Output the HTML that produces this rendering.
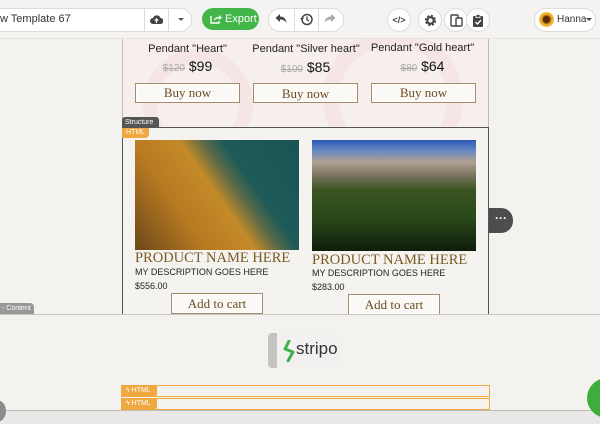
<!DOCTYPE html>
<html><head><meta charset="utf-8"><style>
*{box-sizing:border-box;margin:0;padding:0}
body{width:600px;height:424px;overflow:hidden;background:#f4f2ef;font-family:"Liberation Sans",sans-serif;position:relative}
.abs{position:absolute}
.tb{left:0;top:0;width:600px;height:39px;background:#f4f3f2;border-bottom:1px solid #e4e2df}
.pill{background:#fff;border:1px solid #dedcda;border-radius:12px;height:24px}
.circ{width:24px;height:24px;border-radius:50%;background:#fff;border:1px solid #dedcda;display:flex;align-items:center;justify-content:center}
.serif{font-family:"Liberation Serif",serif}
.btn{border:1px solid #a48a66;background:#fbf9f6;color:#6b4d22;font-family:"Liberation Serif",serif;font-size:13px;text-align:center;box-shadow:inset 0 0 0 1px #fff}
.pt{font-size:11px;color:#222;text-align:center;width:117px}
.pr{font-size:14px;color:#111;text-align:center;width:117px}
.pr s{font-size:10px;color:#aaa}
.hb{left:121px;width:369px;height:12px;border:1.5px solid #f0a840}
.ht{left:121px;width:36px;height:12px;background:#f0a840;color:#fff;font-size:7px;line-height:12px;padding-left:5px;border-radius:0 0 3px 0}
</style></head><body>
<div class="abs tb"></div>
<div class="abs pill" style="left:-14px;top:8px;width:206px;border-radius:0 12px 12px 0;"></div>
<div class="abs" style="left:0;top:13px;font-size:11px;color:#333">w Template 67</div>
<div class="abs" style="left:144px;top:8px;width:1px;height:24px;background:#dedcda"></div>
<div class="abs" style="left:168px;top:8px;width:1px;height:24px;background:#dedcda"></div>
<svg class="abs" style="left:150px;top:14px" width="13" height="11" viewBox="0 0 13 11"><path d="M3 10a3 3 0 0 1 0-6a4 4 0 0 1 7.5 0a3 3 0 0 1 0 6z" fill="#444"/><path d="M6.5 9V5M4.8 6.6l1.7-1.7 1.7 1.7" stroke="#fff" stroke-width="1.2" fill="none"/></svg>
<div class="abs" style="left:178px;top:18px;border:3px solid transparent;border-top:3px solid #555;border-bottom:0"></div>
<div class="abs" style="left:202px;top:8px;width:57px;height:22px;border-radius:11px;background:#43b649;color:#fff;font-size:11px;line-height:22px;padding-left:23px">Export</div>
<svg class="abs" style="left:210px;top:13px" width="12" height="11" viewBox="0 0 12 11"><path d="M1 3v7h8V8" stroke="#fff" stroke-width="1.4" fill="none"/><path d="M4 8c0-3 2-4 5-4V2l3 2.5-3 2.5V5.5C7 5.5 5 6 4 8z" fill="#fff"/></svg>
<div class="abs pill" style="left:268px;top:8px;width:76px"></div>
<div class="abs" style="left:294px;top:8px;width:1px;height:24px;background:#dedcda"></div>
<div class="abs" style="left:318px;top:8px;width:1px;height:24px;background:#dedcda"></div>
<svg class="abs" style="left:275px;top:13px" width="12" height="11" viewBox="0 0 12 11"><path d="M5 1L0.5 5 5 9V6.5c3 0 5 1 6.5 3.5C11 6 9 3.5 5 3.5z" fill="#444"/></svg>
<svg class="abs" style="left:300px;top:13px" width="13" height="13" viewBox="0 0 13 13"><circle cx="7" cy="6.5" r="5" stroke="#444" stroke-width="1.5" fill="none"/><path d="M7 3.5v3.2l2 1.3" stroke="#444" stroke-width="1.3" fill="none"/><path d="M0 5l2.2 2.3L4 5z" fill="#444"/></svg>
<svg class="abs" style="left:324px;top:13px" width="12" height="11" viewBox="0 0 12 11"><path d="M7 1l4.5 4L7 9V6.5c-3 0-5 1-6.5 3.5C1 6 3 3.5 7 3.5z" fill="#aaa"/></svg>
<div class="abs circ" style="left:387px;top:8px;font-size:9px;color:#444;font-weight:bold">&lt;/&gt;</div>
<div class="abs circ" style="left:418px;top:8px"><svg width="13" height="13" viewBox="0 0 13 13"><circle cx="6.5" cy="6.5" r="4.3" fill="none" stroke="#444" stroke-width="2.6" stroke-dasharray="2 1.4"/><circle cx="6.5" cy="6.5" r="3.2" fill="none" stroke="#444" stroke-width="2"/></svg></div>
<div class="abs circ" style="left:444px;top:8px"><svg width="13" height="13" viewBox="0 0 13 13"><rect x="1" y="1" width="7" height="11" rx="1" stroke="#444" stroke-width="1.4" fill="none"/><rect x="6" y="4" width="6" height="8" rx="1" stroke="#444" stroke-width="1.4" fill="#fff"/></svg></div>
<div class="abs circ" style="left:466px;top:8px"><svg width="12" height="13" viewBox="0 0 12 13"><rect x="1" y="2" width="10" height="11" rx="1" fill="#444"/><rect x="4" y="0.5" width="4" height="3" fill="#444" stroke="#fff" stroke-width=".8"/><path d="M3.5 8l2 2 3.5-4" stroke="#fff" stroke-width="1.4" fill="none"/></svg></div>
<div class="abs pill" style="left:534px;top:8px;width:62px"></div>
<div class="abs" style="left:539px;top:12px;width:15px;height:15px;border-radius:50%;background:radial-gradient(#5a2d08 30%,#e8a020 45%,#f3c040 70%)"></div>
<div class="abs" style="left:557px;top:14px;font-size:10px;color:#333">Hanna</div>
<div class="abs" style="left:586px;top:18px;border:3px solid transparent;border-top:3px solid #444;border-bottom:0"></div>

<div class="abs" style="left:122px;top:39px;width:367px;height:89px;background:#f6efed;border-left:1px solid #c9b8a6;border-right:1px solid #c9b8a6;overflow:hidden">
<div class="abs" style="left:20px;top:10px;width:110px;height:110px;border-radius:50%;border:14px solid rgba(240,200,200,.22)"></div>
<div class="abs" style="left:200px;top:-10px;width:140px;height:140px;border-radius:50%;border:16px solid rgba(240,200,200,.22)"></div>
</div>
<div class="abs pt" style="left:129px;top:43px">Pendant "Heart"</div>
<div class="abs pt" style="left:246px;top:43px;width:120px">Pendant "Silver heart"</div>
<div class="abs pt" style="left:364px;top:42px">Pendant "Gold heart"</div>
<div class="abs pr" style="left:129px;top:58px"><s>$120</s> $99</div>
<div class="abs pr" style="left:247px;top:59px"><s>$100</s> $85</div>
<div class="abs pr" style="left:364px;top:58px"><s>$80</s> $64</div>
<div class="abs btn" style="left:135px;top:83px;width:105px;height:20px;line-height:18px">Buy now</div>
<div class="abs btn" style="left:253px;top:83px;width:105px;height:20px;line-height:19px">Buy now</div>
<div class="abs btn" style="left:371px;top:83px;width:105px;height:20px;line-height:18px">Buy now</div>

<div class="abs" style="left:122px;top:127px;width:367px;height:188px;border:1.5px solid #555;background:#f5f3f0"></div>
<div class="abs" style="left:122px;top:117px;width:37px;height:11px;background:#555;color:#fff;font-size:7px;line-height:11px;padding-left:3px;border-radius:3px 3px 0 0">Structure</div>
<div class="abs" style="left:122px;top:128px;width:27px;height:10px;background:#f0a840;color:#fff;font-size:7px;line-height:10px;padding-left:4px;border-radius:0 0 4px 0">HTML</div>
<div class="abs" style="left:135px;top:140px;width:164px;height:110px;background:linear-gradient(55deg,#6a4818 0%,#b87a22 30%,#c48a28 50%,#5a6a48 60%,#1d5a58 68%,#1b5452 100%)"></div>
<div class="abs" style="left:312px;top:140px;width:164px;height:111px;background:linear-gradient(180deg,#2c58b8 0%,#6a8ac0 10%,#b0a090 20%,#7a7260 32%,#3a5420 45%,#2a4a1a 70%,#101c0c 100%)"></div>
<div class="abs serif" style="left:135px;top:250px;font-size:14.5px;color:#7a5a24">PRODUCT NAME HERE</div>
<div class="abs serif" style="left:312px;top:252px;font-size:14.5px;color:#7a5a24">PRODUCT NAME HERE</div>
<div class="abs" style="left:135px;top:267px;font-size:9px;color:#222">MY DESCRIPTION GOES HERE</div>
<div class="abs" style="left:312px;top:268px;font-size:9px;color:#222">MY DESCRIPTION GOES HERE</div>
<div class="abs" style="left:135px;top:281px;font-size:9px;color:#222">$556.00</div>
<div class="abs" style="left:312px;top:282px;font-size:9px;color:#222">$283.00</div>
<div class="abs btn" style="left:171px;top:293px;width:92px;height:21px;line-height:20px">Add to cart</div>
<div class="abs btn" style="left:348px;top:294px;width:92px;height:21px;line-height:20px">Add to cart</div>
<div class="abs" style="left:489px;top:208px;width:24px;height:25px;background:#4d4d4d;border-radius:0 12px 12px 0;color:#fff;font-size:12px;font-weight:bold;line-height:20px;text-align:center">···</div>

<div class="abs" style="left:0;top:314px;width:600px;height:1px;background:#c8c6c4"></div>
<div class="abs" style="left:0;top:303px;width:34px;height:11px;background:#9a9896;color:#fff;font-size:7px;line-height:11px;padding-left:2px;border-radius:0 4px 0 0">- Content</div>

<div class="abs" style="left:268px;top:333px;width:72px;height:36px;background:#f2f1f0"></div>
<div class="abs" style="left:268px;top:333px;width:9px;height:35px;background:#c4c3c2;border-radius:4px 0 0 4px"></div>
<svg class="abs" style="left:283px;top:340px" width="14" height="22" viewBox="0 0 14 22"><path d="M6 1L2 9l8 3-5 9" stroke="#3fb14a" stroke-width="3" fill="none" stroke-linecap="round" stroke-linejoin="round"/></svg>
<div class="abs" style="left:296px;top:339px;font-size:17px;color:#333">stripo</div>

<div class="abs hb" style="top:385px"></div>
<div class="abs ht" style="top:385px">ϟ HTML</div>
<div class="abs hb" style="top:398px"></div>
<div class="abs ht" style="top:398px">ϟ HTML</div>

<div class="abs" style="left:0;top:410px;width:600px;height:14px;background:#e9e8e7;border-top:1px solid #bdbbba"></div>
<div class="abs" style="left:-12px;top:400px;width:18px;height:22px;border-radius:50%;background:#8c8c8c"></div>
<div class="abs" style="left:587px;top:378px;width:40px;height:40px;border-radius:50%;background:#3fad3b"></div>
</body></html>
